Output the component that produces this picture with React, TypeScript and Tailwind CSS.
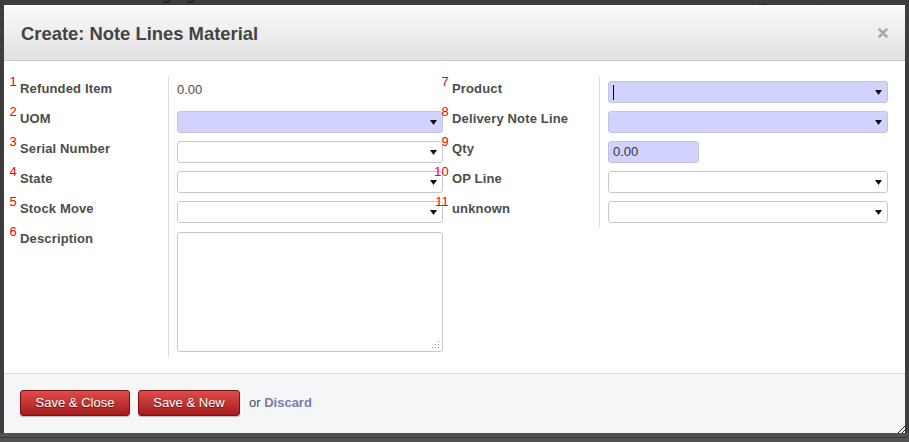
import React from "react";

const font = { fontFamily: '"Liberation Sans", Arial, sans-serif' };

function Arrow() {
  return (
    <svg className="absolute right-[5px] top-[8px]" width="7" height="5" viewBox="0 0 7 5">
      <path d="M0 0H7L3.5 5Z" fill="#111" />
    </svg>
  );
}

function Select({ blue, caret }: { blue?: boolean; caret?: boolean }) {
  return (
    <div
      className={
        blue
          ? "relative h-[22px] w-full rounded-[3px] border border-[#c4c4d8] bg-[#d2d2ff]"
          : "relative h-[22px] w-full rounded-[3px] border border-[#c8c8c8] bg-white"
      }
    >
      {caret && <div className="absolute left-[4px] top-[3px] h-[15px] w-px bg-black" />}
      <Arrow />
    </div>
  );
}

function Label({ n, text }: { n: string; text: string }) {
  return (
    <div className="relative inline-block">
      <span className="absolute right-full top-[-6px] mr-[3px] text-[13px] leading-[13px] font-normal text-[#ff0000]">
        {n}
      </span>
      {text}
    </div>
  );
}

function LabelCell({ n, text, tall }: { n: string; text: string; tall?: boolean }) {
  return (
    <div
      className={
        tall
          ? "h-[130px] border-r border-[#dcdcdc] pt-[4px] text-[13px] font-bold leading-[15px] tracking-[0.15px] text-[#4c4c4c]"
          : "h-[30px] border-r border-[#dcdcdc] pt-[4px] text-[13px] font-bold leading-[15px] tracking-[0.15px] text-[#4c4c4c]"
      }
    >
      <Label n={n} text={text} />
    </div>
  );
}

function FieldCell({ children }: { children: React.ReactNode }) {
  return <div className="pl-[8px] pt-[4px]">{children}</div>;
}

function Button({ children, wide }: { children: React.ReactNode; wide?: boolean }) {
  return (
    <button
      className={
        wide
          ? "h-[26px] w-[110px] rounded-[3px] border border-[#7a1414] bg-gradient-to-b from-[#e04a4a] to-[#a51b1b] text-[13px] leading-[24px] text-white shadow-[0_1px_1px_rgba(0,0,0,0.25)] [text-shadow:0_1px_1px_rgba(0,0,0,0.5)]"
          : "h-[26px] w-[102px] rounded-[3px] border border-[#7a1414] bg-gradient-to-b from-[#e04a4a] to-[#a51b1b] text-[13px] leading-[24px] text-white shadow-[0_1px_1px_rgba(0,0,0,0.25)] [text-shadow:0_1px_1px_rgba(0,0,0,0.5)]"
      }
      style={font}
    >
      {children}
    </button>
  );
}

export default function App() {
  return (
    <div className="relative h-[442px] w-[909px] overflow-hidden bg-[#3d3d3d]" style={font}>
      {/* backdrop page text */}
      <div className="absolute left-[68px] top-[-13px] text-[16px] font-bold leading-[16px] text-[#262626]">
        Order Packaging
      </div>
      <div className="absolute left-[230px] top-[-13px] text-[16px] leading-[16px] text-[#262626]">
        1610058 /SPM-ADM/PKD-ADM/III/16
      </div>
      <div className="absolute left-[595px] top-[-13px] text-[16px] font-bold leading-[16px] text-[#262626]">
        Customer
      </div>
      <div className="absolute left-[755px] top-[-13px] text-[16px] leading-[16px] text-[#262626]">
        WIJAYA KARYA (Persero)
      </div>

      {/* bottom band */}
      <div className="absolute bottom-0 left-0 h-[9px] w-full bg-[#525252]">
        <div className="mt-[4px] h-px w-full bg-[#3a3a3a]" />
      </div>

      {/* dialog */}
      <div className="absolute left-[4px] top-[5px] flex h-[428px] w-[901px] flex-col bg-white">
        {/* header */}
        <div className="flex h-[56px] items-center justify-between border-b border-[#c8c8c8] bg-gradient-to-b from-[#fbfbfb] to-[#e1e1e1] pl-[17px] pr-[17px]">
          <div className="pt-[2px] text-[18.4px] font-bold leading-[20px] text-[#444444]">
            Create: Note Lines Material
          </div>
          <svg width="10" height="10" viewBox="0 0 10 10" className="mt-[1px]">
            <path d="M1.5 1.5L8.5 8.5M8.5 1.5L1.5 8.5" stroke="#a8a8a8" strokeWidth="2.6" strokeLinecap="round" />
          </svg>
        </div>

        {/* body */}
        <div className="flex flex-1 pl-[16px] pt-[16px]">
          {/* left group */}
          <div className="grid w-[423px] grid-cols-[149px_274px] content-start">
            <LabelCell n="1" text="Refunded Item" />
            <FieldCell>
              <div className="pt-[1px] text-[13px] leading-[15px] text-[#4c4c4c]">0.00</div>
            </FieldCell>
            <LabelCell n="2" text="UOM" />
            <FieldCell>
              <Select blue />
            </FieldCell>
            <LabelCell n="3" text="Serial Number" />
            <FieldCell>
              <Select />
            </FieldCell>
            <LabelCell n="4" text="State" />
            <FieldCell>
              <Select />
            </FieldCell>
            <LabelCell n="5" text="Stock Move" />
            <FieldCell>
              <Select />
            </FieldCell>
            <LabelCell n="6" text="Description" tall />
            <div className="pl-[8px] pt-[5px]">
              <div className="relative h-[120px] w-[266px] rounded-[3px] border border-[#c8c8c8] bg-white">
                <svg className="absolute bottom-[2px] right-[2px]" width="8" height="8" viewBox="0 0 8 8">
                  <rect x="6" y="0" width="1" height="1" fill="#999" />
                  <rect x="3" y="3" width="1" height="1" fill="#999" />
                  <rect x="6" y="3" width="1" height="1" fill="#999" />
                  <rect x="0" y="6" width="1" height="1" fill="#999" />
                  <rect x="3" y="6" width="1" height="1" fill="#999" />
                  <rect x="6" y="6" width="1" height="1" fill="#999" />
                </svg>
              </div>
            </div>
          </div>

          {/* right group */}
          <div className="ml-[9px] grid w-[436px] grid-cols-[148px_288px] content-start">
            <LabelCell n="7" text="Product" />
            <FieldCell>
              <Select blue caret />
            </FieldCell>
            <LabelCell n="8" text="Delivery Note Line" />
            <FieldCell>
              <Select blue />
            </FieldCell>
            <LabelCell n="9" text="Qty" />
            <FieldCell>
              <div className="h-[22px] w-[91px] rounded-[3px] border border-[#c4c4d8] bg-[#d2d2ff] pl-[4px] text-[13px] leading-[20px] text-[#333]">
                0.00
              </div>
            </FieldCell>
            <LabelCell n="10" text="OP Line" />
            <FieldCell>
              <Select />
            </FieldCell>
            <LabelCell n="11" text="unknown" />
            <FieldCell>
              <Select />
            </FieldCell>
          </div>
        </div>

        {/* footer */}
        <div className="flex h-[60px] items-start gap-[8px] border-t border-[#dcdcdc] bg-[#f5f6f8] pl-[16px] pt-[16px]">
          <Button wide>Save &amp; Close</Button>
          <Button>Save &amp; New</Button>
          <div className="ml-[1px] pt-[5px] text-[13px] leading-[15px] text-[#4c4c4c]">
            or <span className="font-bold text-[#7b7bb0]">Discard</span>
          </div>
        </div>
      </div>

      {/* resize grip */}
      <svg className="absolute left-[897px] top-[424px]" width="10" height="10" viewBox="0 0 10 10">
        <path d="M1 9L9 1M5 9L9 5" stroke="#222" strokeWidth="1" />
      </svg>
    </div>
  );
}
